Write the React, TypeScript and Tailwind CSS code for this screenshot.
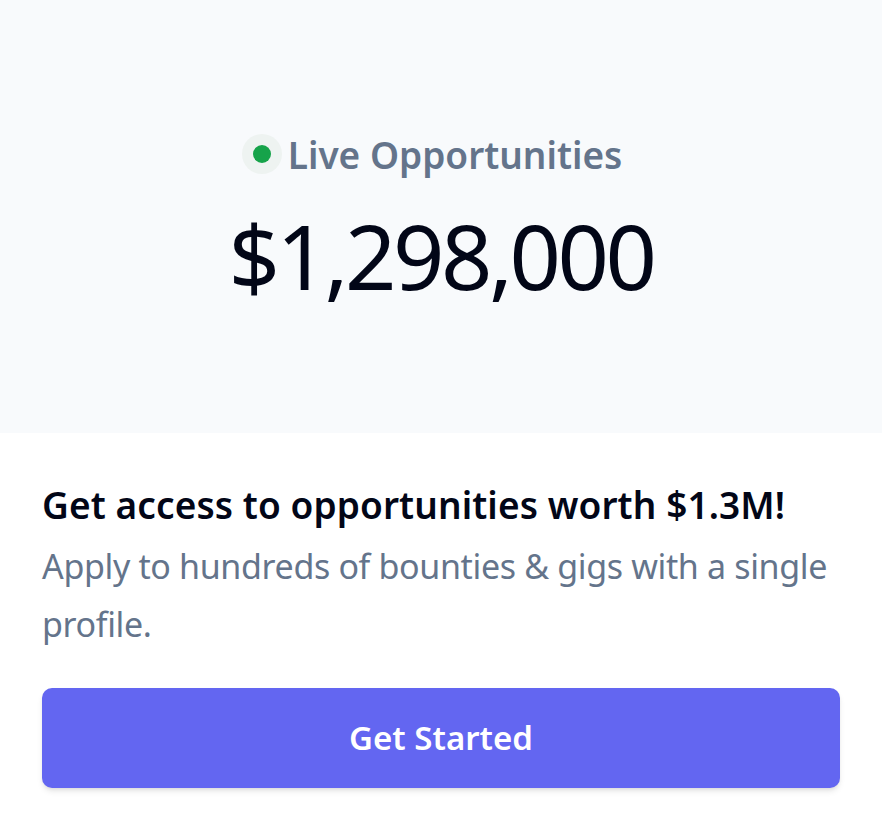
export default function App() {
  return (
    <div
      className="w-[882px] h-[836px] bg-white"
      style={{ fontFamily: '"Noto Sans", "Open Sans", sans-serif' }}
    >
      <div className="h-[433px] bg-[#f8fafc] flex flex-col items-center pt-[134px]">
        <div className="flex items-center gap-[6px] pr-[18px]">
          <span className="flex h-[40px] w-[40px] items-center justify-center rounded-full bg-[#eef3f1]">
            <span className="h-[18px] w-[18px] rounded-full bg-[#16a34a]" />
          </span>
          <span className="text-[37px] font-semibold leading-none text-[#64748b]">
            Live Opportunities
          </span>
        </div>
        <div className="mt-[36px] text-[90px] leading-none tracking-[-3.5px] text-[#020617]">
          $1,298,000
        </div>
      </div>
      <div className="px-[42px] pt-[48px]">
        <h2 className="text-[37px] font-semibold leading-[48px] tracking-[0.1px] text-[#020617]">
          Get access to opportunities worth $1.3M!
        </h2>
        <p className="mt-[8px] text-[34px] leading-[58px] tracking-[-0.35px] text-[#64748b]">
          Apply to hundreds of bounties &amp; gigs with a single profile.
        </p>
        <button className="mt-[35px] flex h-[100px] w-full items-center justify-center rounded-[10px] bg-[#6366f1] text-[33px] font-semibold text-white shadow-md">
          Get Started
        </button>
      </div>
    </div>
  );
}
